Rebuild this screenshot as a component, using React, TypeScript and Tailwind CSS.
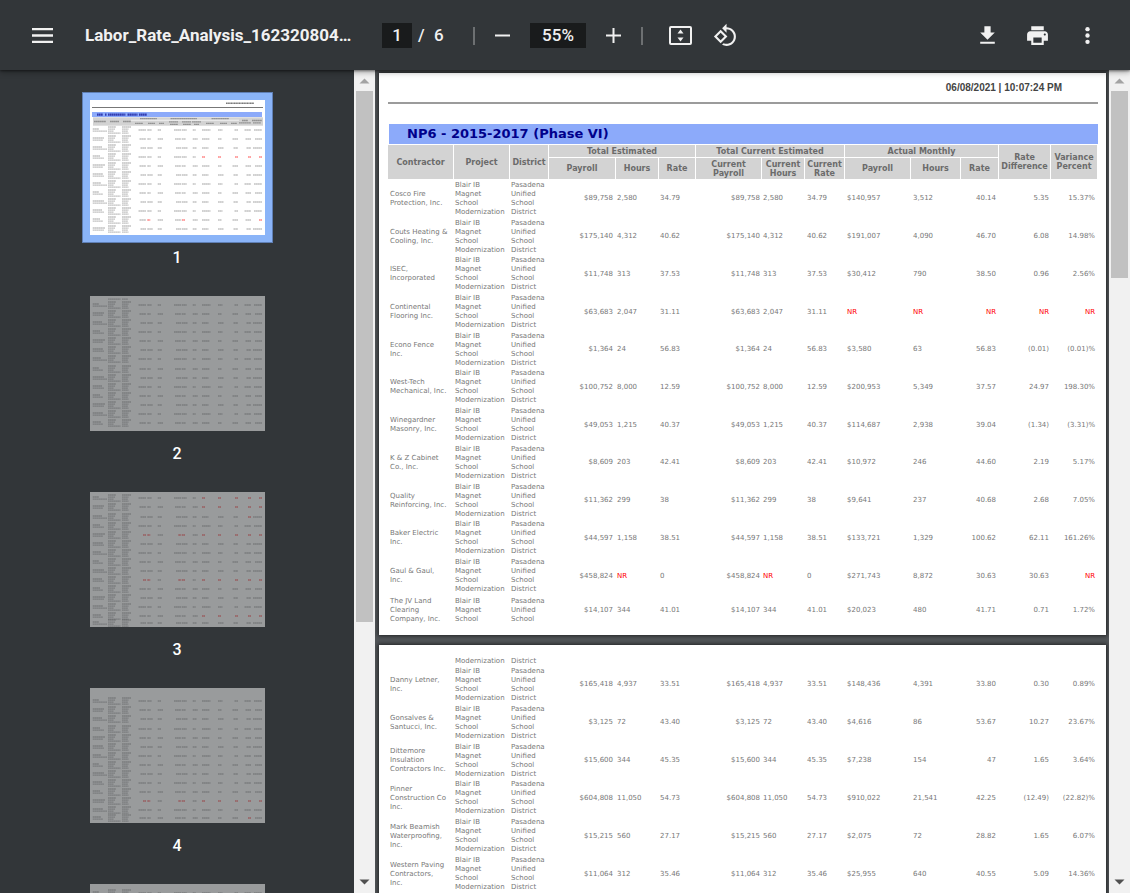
import React from "react";

type Row = {
  name: string;
  // payroll, hours, rate, current payroll, current hours, current rate,
  // actual payroll, actual hours, actual rate, rate difference, variance
  cells: string[];
};

const row = (name: string, values: string): Row => ({ name, cells: values.split(" ") });

const firstPage: Row[] = [
  row("Cosco Fire\nProtection, Inc.", "$89,758 2,580 34.79 $89,758 2,580 34.79 $140,957 3,512 40.14 5.35 15.37%"),
  row("Couts Heating &\nCooling, Inc.", "$175,140 4,312 40.62 $175,140 4,312 40.62 $191,007 4,090 46.70 6.08 14.98%"),
  row("ISEC,\nIncorporated", "$11,748 313 37.53 $11,748 313 37.53 $30,412 790 38.50 0.96 2.56%"),
  row("Continental\nFlooring Inc.", "$63,683 2,047 31.11 $63,683 2,047 31.11 NR NR NR NR NR"),
  row("Econo Fence\nInc.", "$1,364 24 56.83 $1,364 24 56.83 $3,580 63 56.83 (0.01) (0.01)%"),
  row("West-Tech\nMechanical, Inc.", "$100,752 8,000 12.59 $100,752 8,000 12.59 $200,953 5,349 37.57 24.97 198.30%"),
  row("Winegardner\nMasonry, Inc.", "$49,053 1,215 40.37 $49,053 1,215 40.37 $114,687 2,938 39.04 (1.34) (3.31)%"),
  row("K & Z Cabinet\nCo., Inc.", "$8,609 203 42.41 $8,609 203 42.41 $10,972 246 44.60 2.19 5.17%"),
  row("Quality\nReinforcing, Inc.", "$11,362 299 38 $11,362 299 38 $9,641 237 40.68 2.68 7.05%"),
  row("Baker Electric\nInc.", "$44,597 1,158 38.51 $44,597 1,158 38.51 $133,721 1,329 100.62 62.11 161.26%"),
  row("Gaul & Gaul,\nInc.", "$458,824 NR 0 $458,824 NR 0 $271,743 8,872 30.63 30.63 NR"),
  row("The JV Land\nClearing\nCompany, Inc.", "$14,107 344 41.01 $14,107 344 41.01 $20,023 480 41.71 0.71 1.72%"),
];

const secondPage: Row[] = [
  row("Danny Letner,\nInc.", "$165,418 4,937 33.51 $165,418 4,937 33.51 $148,436 4,391 33.80 0.30 0.89%"),
  row("Gonsalves &\nSantucci, Inc.", "$3,125 72 43.40 $3,125 72 43.40 $4,616 86 53.67 10.27 23.67%"),
  row("Dittemore\nInsulation\nContractors Inc.", "$15,600 344 45.35 $15,600 344 45.35 $7,238 154 47 1.65 3.64%"),
  row("Pinner\nConstruction Co\nInc.", "$604,808 11,050 54.73 $604,808 11,050 54.73 $910,022 21,541 42.25 (12.49) (22.82)%"),
  row("Mark Beamish\nWaterproofing,\nInc.", "$15,215 560 27.17 $15,215 560 27.17 $2,075 72 28.82 1.65 6.07%"),
  row("Western Paving\nContractors,\nInc.", "$11,064 312 35.46 $11,064 312 35.46 $25,955 640 40.55 5.09 14.36%"),
];

const cellAlign = [
  "text-right pr-[3px]",
  "pl-px",
  "pl-px",
  "text-right pr-[2px]",
  "pl-px",
  "pl-[2px]",
  "pl-[2px]",
  "pl-[2px]",
  "text-right pr-[3px]",
  "text-right pr-[2px]",
  "text-right pr-[3px]",
];

const projectLines = ["Blair IB", "Magnet", "School", "Modernization"];
const districtLines = ["Pasadena", "Unified", "School", "District"];

function Columns() {
  return (
    <colgroup>
      <col className="w-[66px]" />
      <col className="w-[56px]" />
      <col className="w-[39px]" />
      <col className="w-[67px]" />
      <col className="w-[43px]" />
      <col className="w-[37px]" />
      <col className="w-[66px]" />
      <col className="w-[43px]" />
      <col className="w-[40px]" />
      <col className="w-[66px]" />
      <col className="w-[50px]" />
      <col className="w-[38px]" />
      <col className="w-[52px]" />
      <col className="w-[47px]" />
    </colgroup>
  );
}

function DataRow({ data, lines = 4 }: { data: Row; lines?: number }) {
  return (
    <tr className={lines === 4 ? "" : "h-[31px]"}>
      <td className="whitespace-pre pl-[2px]">{data.name}</td>
      <td className="whitespace-pre pl-px">{projectLines.slice(0, lines).join("\n")}</td>
      <td className="whitespace-pre pl-px">{districtLines.slice(0, lines).join("\n")}</td>
      {data.cells.map((value, i) => (
        <td key={i} className={`whitespace-nowrap ${cellAlign[i]} ${value === "NR" ? "text-[#ff0000]" : ""}`}>
          {value}
        </td>
      ))}
    </tr>
  );
}

function Head({ children, colSpan, rowSpan }: { children: React.ReactNode; colSpan?: number; rowSpan?: number }) {
  return (
    <th
      colSpan={colSpan}
      rowSpan={rowSpan}
      className="whitespace-pre border-r border-b border-white bg-[#d3d3d3] bg-clip-padding p-0 text-center align-middle"
    >
      {children}
    </th>
  );
}

function ReportPages() {
  return (
    <div className="flex flex-col gap-[10px] pt-[3px] pr-[3px] pl-[4px] font-['DejaVu_Sans','Verdana',sans-serif] text-[7px] leading-[9px] text-[#777]">
      <article className="h-[562px] shrink-0 bg-white pt-[9px] pr-[8px] pl-[9px] shadow-[0_0_4px_1px_rgba(0,0,0,0.6)]">
        <p className="pr-[36px] text-right font-['Liberation_Sans',Arial,sans-serif] text-[10px] leading-[12px] font-bold text-[#444]">
          06/08/2021 | 10:07:24 PM
        </p>
        <hr className="mt-[8px] border-t-2 border-[#9b9b9b]" />
        <h1 className="mt-[20px] ml-px bg-[#8caafa] pl-[18px] text-[13px] leading-[20px] font-bold text-[#00008b]">
          NP6 - 2015-2017 (Phase VI)
        </h1>
        <table className="mt-px h-[481px] w-full table-fixed border-separate border-spacing-0">
          <Columns />
          <thead className="text-[8px] leading-[9px] font-bold text-[#6b6b6b]">
            <tr className="h-[13px]">
              <Head rowSpan={2}>Contractor</Head>
              <Head rowSpan={2}>Project</Head>
              <Head rowSpan={2}>District</Head>
              <Head colSpan={3}>Total Estimated</Head>
              <Head colSpan={3}>Total Current Estimated</Head>
              <Head colSpan={3}>Actual Monthly</Head>
              <Head rowSpan={2}>{"Rate\nDifference"}</Head>
              <Head rowSpan={2}>{"Variance\nPercent"}</Head>
            </tr>
            <tr className="h-[22px]">
              <Head>Payroll</Head>
              <Head>Hours</Head>
              <Head>Rate</Head>
              <Head>{"Current\nPayroll"}</Head>
              <Head>{"Current\nHours"}</Head>
              <Head>{"Current\nRate"}</Head>
              <Head>Payroll</Head>
              <Head>Hours</Head>
              <Head>Rate</Head>
            </tr>
          </thead>
          <tbody>
            {firstPage.map((r, i) => (
              <DataRow key={r.name} data={r} lines={i === firstPage.length - 1 ? 3 : 4} />
            ))}
          </tbody>
        </table>
      </article>

      <article className="h-[562px] shrink-0 bg-white pt-[11px] pr-[8px] pl-[9px] shadow-[0_0_4px_1px_rgba(0,0,0,0.6)]">
        <table className="h-[237px] w-full table-fixed border-separate border-spacing-0">
          <Columns />
          <tbody>
            <tr className="h-[10px]">
              <td />
              <td className="pl-px">Modernization</td>
              <td className="pl-px">District</td>
              <td colSpan={11} />
            </tr>
            {secondPage.map((r) => (
              <DataRow key={r.name} data={r} />
            ))}
          </tbody>
        </table>
      </article>
    </div>
  );
}

// Thumbnail rows: vertical centre and a flag. "a" = actual columns missing, "e" = everything missing,
// "g" = hours and variance missing, "d" = difference missing.
type Mark = [number, string?];

const thumbs: { page: number; marks: Mark[] }[] = [
  {
    page: 1,
    marks: [[30], [39], [48], [57, "a"], [66], [75], [84], [93], [102], [111], [120, "g"], [129]],
  },
  {
    page: 2,
    marks: [[9], [18], [27], [36], [45], [54], [63], [73], [82], [91], [100], [109], [118], [127]],
  },
  {
    page: 3,
    marks: [
      [6, "a"], [15, "a"], [25, "d"], [34], [43, "e"], [52], [61], [70], [79], [88, "e"], [97], [106], [115],
      [124, "a"], [131],
    ],
  },
  {
    page: 4,
    marks: [
      [13], [22], [31], [41], [50], [59], [68], [77], [86], [95], [104], [113, "e"], [122], [130, "d"],
    ],
  },
  { page: 5, marks: [[9], [18], [27], [36]] },
];

const spans: [number, number][] = [
  [48.5, 56], [57.3, 62.7], [67.7, 73], [84, 91.3], [92, 97.7], [102.7, 107.7],
  [112, 120.5], [128, 133.5], [142.5, 148], [154.5, 161], [163, 172],
];

const missing: Record<string, number[]> = {
  a: [6, 7, 8, 9, 10],
  e: [0, 1, 3, 4, 6, 7, 8, 9, 10],
  g: [1, 4, 10],
  d: [9],
};

function Stroke({ x1, x2, y, red }: { x1: number; x2: number; y: number; red?: boolean }) {
  return (
    <line
      x1={x1}
      x2={x2}
      y1={y}
      y2={y}
      stroke={red ? "#ff2020" : "#555"}
      strokeOpacity={red ? 0.55 : 0.36}
      strokeWidth={1.3}
      strokeDasharray="1.7 0.2"
    />
  );
}

function Thumbnail({ page, marks }: { page: number; marks: Mark[] }) {
  const header = page === 1;
  return (
    <svg viewBox="0 0 175 135" className="block w-full bg-white" aria-hidden="true">
      {header && (
        <g>
          <line x1="136" x2="164" y1="3.2" y2="3.2" stroke="#222" strokeOpacity="0.6" strokeWidth="1.5" strokeDasharray="1.3 0.3" />
          <rect x="2" y="7" width="171" height="1" fill="#777" />
          <rect x="2" y="12" width="170" height="5" fill="#8caafa" />
          {[[7, 13], [15, 16.5], [18, 35.5], [37.5, 47.5], [49, 57]].map(([x1, x2]) => (
            <line key={x1} x1={x1} x2={x2} y1="14.6" y2="14.6" stroke="#00008b" strokeOpacity="0.65" strokeWidth="2.4" strokeDasharray="1.6 0.3" />
          ))}
          <rect x="3" y="17.3" width="170" height="8.4" fill="#d3d3d3" />
          <rect x="41" y="19.8" width="108" height="0.7" fill="#fff" />
          {[[50, 67, 18.6], [80.5, 107, 18.6], [121.5, 139, 18.6], [4, 16, 21.5], [20, 29, 21.5], [33, 41, 21.5],
            [45, 53, 23.3], [58, 65, 23.3], [69, 74, 23.3], [79, 88, 21.8], [92, 101, 21.8], [102, 111, 21.8],
            [80, 88, 24.3], [93, 101, 24.3], [104, 109, 24.3], [116, 124, 23.3], [130, 137, 23.3], [141, 147, 23.3],
            [152, 158, 20.5], [162, 172, 20.5], [149, 161, 22.8], [163, 171, 22.8]].map(([x1, x2, y], i) => (
            <line key={i} x1={x1} x2={x2} y1={y} y2={y} stroke="#444" strokeOpacity="0.45" strokeWidth="1.3" strokeDasharray="1.7 0.2" />
          ))}
        </g>
      )}
      {!header && page % 2 === 0 && marks[0][0] < 12 && (
        <g>
          <Stroke x1={18} x2={30.5} y={3.2} />
          <Stroke x1={32} x2={38} y={3.2} />
        </g>
      )}
      {marks.map(([y, flag], r) => (
        <g key={r}>
          <Stroke x1={2.7} x2={9 + ((r * 5) % 7)} y={y - 1} />
          <Stroke x1={2.7} x2={r % 3 === 1 ? 13 : 17 - (r % 2) * 3} y={y + 1.1} />
          {[26, 25, 23.5, 30.5].map((x2, i) => (
            <Stroke key={i} x1={18} x2={x2} y={y - 3 + i * 2.05} />
          ))}
          {[41, 38.5, 38, 38.5].map((x2, i) => (
            <Stroke key={i} x1={32} x2={x2} y={y - 3 + i * 2.05} />
          ))}
          {spans.map(([x1, x2], i) => {
            const red = flag ? missing[flag].includes(i) : false;
            const rightAligned = i === 0 || i === 3 || i >= 8;
            const width = red ? 3 : x2 - x1 - ((r + (i % 3)) % 3);
            return (
              <Stroke key={i} x1={rightAligned ? x2 - width : x1} x2={rightAligned ? x2 : x1 + width} y={y} red={red} />
            );
          })}
        </g>
      ))}
    </svg>
  );
}

function ScrollBar({ thumb }: { thumb: string }) {
  return (
    <div className="flex w-[21px] shrink-0 flex-col items-center bg-[#f1f1f1]" aria-hidden="true">
      <svg viewBox="0 0 21 21" className="h-[21px] w-[21px] shrink-0">
        <path d="M5.5 13.5 10.5 8.5 15.5 13.5z" fill="#a3a3a3" />
      </svg>
      <div className="min-h-0 w-[17px] flex-1">
        <div className={`w-full bg-[#c1c1c1] ${thumb}`} />
      </div>
      <svg viewBox="0 0 21 21" className="h-[21px] w-[21px] shrink-0">
        <path d="M5.5 7.5 10.5 12.5 15.5 7.5z" fill="#505050" />
      </svg>
    </div>
  );
}

function IconButton({ label, className, children }: { label: string; className: string; children: React.ReactNode }) {
  return (
    <button type="button" aria-label={label} className={`flex h-10 shrink-0 items-center justify-center rounded-full ${className}`}>
      {children}
    </button>
  );
}

function Toolbar() {
  return (
    <header className="relative z-10 flex h-[70px] shrink-0 items-center bg-[#323639] pt-px pr-[23px] pl-[22px] font-['Roboto',sans-serif] text-[17px] font-medium text-[#f1f1f1] shadow-[0_2px_6px_rgba(0,0,0,0.35),0_1px_2px_rgba(0,0,0,0.4)]">
      <IconButton label="Menu" className="w-10">
        <svg viewBox="0 0 21 15" className="h-[15px] w-[21px]" fill="currentColor">
          <path d="M0 0h21v2.3H0zM0 6.3h21v2.4H0zM0 12.7h21V15H0z" />
        </svg>
      </IconButton>
      <span className="ml-[23px] w-[272px] shrink-0 whitespace-nowrap font-bold">Labor_Rate_Analysis_162320804…</span>
      <div className="ml-[25px] flex shrink-0 items-center">
        <input
          aria-label="Page number"
          defaultValue="1"
          className="h-[25px] w-[30px] bg-[#191b1c] text-center leading-[25px] outline-none"
        />
        <span className="ml-[6px] w-[16px]">/</span>
        <span className="w-[39px]">6</span>
        <span className="h-[18px] w-[2px] bg-[#6d7072]" />
        <IconButton label="Zoom out" className="ml-[11px] w-8">
          <svg viewBox="0 0 15 15" className="h-[15px] w-[15px]">
            <path d="M0 7.5h15" stroke="currentColor" strokeWidth="2" />
          </svg>
        </IconButton>
        <input
          aria-label="Zoom level"
          defaultValue="55%"
          className="ml-[12px] h-[25px] w-[56px] bg-[#191b1c] text-center leading-[25px] outline-none"
        />
        <IconButton label="Zoom in" className="ml-[11px] w-8">
          <svg viewBox="0 0 15 15" className="h-[15px] w-[15px]">
            <path d="M0 7.5h15M7.5 0v15" stroke="currentColor" strokeWidth="2" />
          </svg>
        </IconButton>
        <span className="ml-[12px] h-[18px] w-[2px] bg-[#6d7072]" />
        <IconButton label="Fit to page" className="ml-[21px] w-8">
          <svg viewBox="0 0 23 19" className="h-[19px] w-[23px]">
            <rect x="1" y="1" width="21" height="17" rx="1" fill="none" stroke="currentColor" strokeWidth="2" />
            <path d="M8.5 7.5 11.5 3.5 14.5 7.5zM8.5 11.5 11.5 15.5 14.5 11.5z" fill="currentColor" />
          </svg>
        </IconButton>
        <IconButton label="Rotate counterclockwise" className="ml-[13px] w-8">
          <svg viewBox="0 0 24 24" className="h-[25px] w-[25px]" fill="currentColor">
            <path d="M7.34 6.41.86 12.9l6.49 6.48 6.49-6.48-6.5-6.49zM3.69 12.9l3.66-3.66L11 12.9l-3.66 3.66-3.65-3.66zm15.67-6.26C17.61 4.88 15.3 4 13 4V.76L8.76 5 13 9.24V6c1.79 0 3.58.68 4.95 2.05 2.73 2.73 2.73 7.17 0 9.9C16.58 19.32 14.79 20 13 20c-.97 0-1.94-.21-2.84-.61l-1.49 1.49C10.02 21.62 11.51 22 13 22c2.3 0 4.61-.88 6.36-2.64 3.52-3.51 3.52-9.21 0-12.72z" />
          </svg>
        </IconButton>
      </div>
      <div className="ml-auto flex shrink-0 items-center gap-[10px]">
        <IconButton label="Download" className="w-10">
          <svg viewBox="0 0 24 24" className="h-[25px] w-[25px]" fill="currentColor">
            <path d="M19 9h-4V3H9v6H5l7 7 7-7zM5 18v2h14v-2H5z" />
          </svg>
        </IconButton>
        <IconButton label="Print" className="w-10">
          <svg viewBox="0 0 24 24" className="h-[25px] w-[25px]" fill="currentColor">
            <path d="M19 8H5c-1.66 0-3 1.34-3 3v6h4v4h12v-4h4v-6c0-1.66-1.34-3-3-3zm-3 11H8v-5h8v5zm3-7c-.55 0-1-.45-1-1s.45-1 1-1 1 .45 1 1-.45 1-1 1zm-1-9H6v4h12V3z" />
          </svg>
        </IconButton>
        <IconButton label="More actions" className="w-10">
          <svg viewBox="0 0 24 24" className="h-[25px] w-[25px]" fill="currentColor">
            <circle cx="12" cy="5.9" r="2.1" />
            <circle cx="12" cy="12" r="2.1" />
            <circle cx="12" cy="18.1" r="2.1" />
          </svg>
        </IconButton>
      </div>
    </header>
  );
}

export default function App() {
  return (
    <div className="flex h-screen flex-col overflow-hidden bg-[#525659]">
      <Toolbar />
      <div className="flex min-h-0 flex-1">
        <nav aria-label="Page thumbnails" className="flex w-[375px] shrink-0 bg-[#323639]">
          <div className="flex min-w-0 flex-1 flex-col items-center gap-[28px] overflow-hidden pt-[30px] font-['Roboto',sans-serif] text-[16px] leading-[20px] font-medium text-white">
            {thumbs.map((t) => (
              <button key={t.page} type="button" aria-current={t.page === 1} className="flex w-[175px] shrink-0 flex-col items-center gap-[13px]">
                <span
                  className={
                    t.page === 1
                      ? "block w-full shadow-[0_0_0_7px_#8ab4f8,0_0_0_8px_#5f7fb4]"
                      : "block w-full opacity-50"
                  }
                >
                  <Thumbnail page={t.page} marks={t.marks} />
                </span>
                <span>{t.page}</span>
              </button>
            ))}
          </div>
          <ScrollBar thumb="h-[68%]" />
        </nav>
        <main className="min-w-0 flex-1 overflow-hidden">
          <ReportPages />
        </main>
        <ScrollBar thumb="h-[24%]" />
      </div>
    </div>
  );
}
